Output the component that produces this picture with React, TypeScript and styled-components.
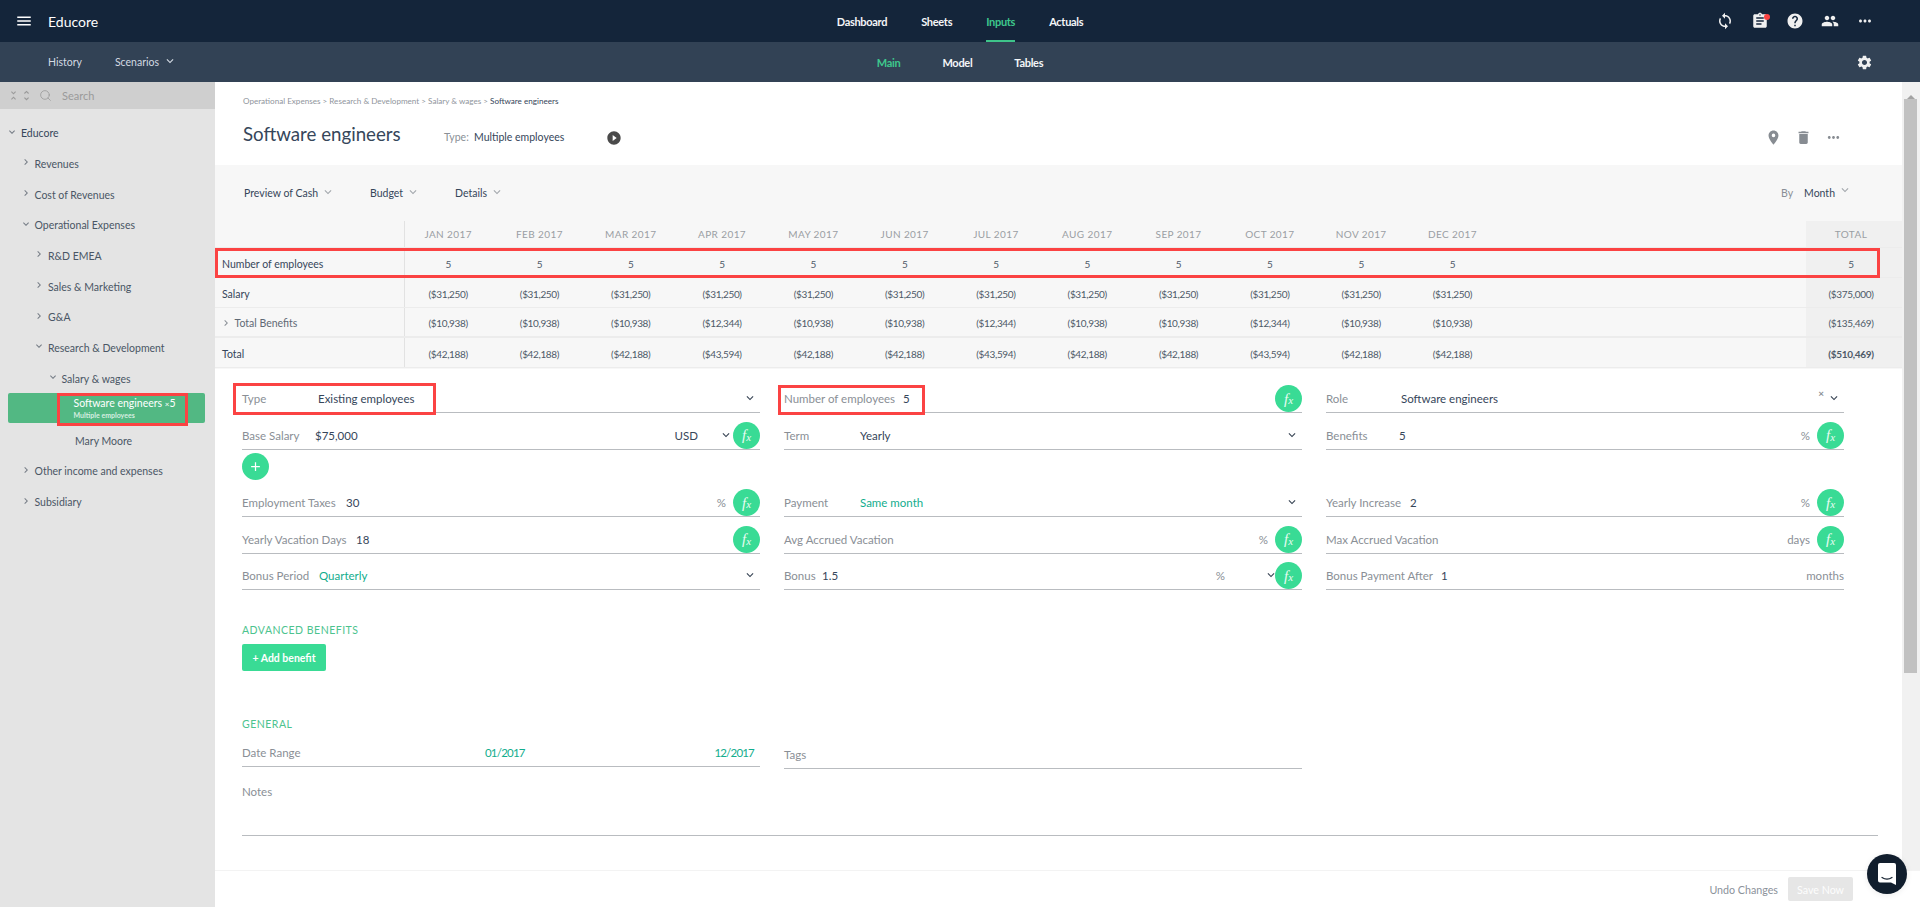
import React from 'react';
import styled, { createGlobalStyle } from 'styled-components';
import {
  MdMenu,
  MdSync,
  MdAssignment,
  MdHelp,
  MdPeople,
  MdMoreHoriz,
  MdSettings,
  MdPlace,
  MdDelete,
  MdPlayCircleFilled,
  MdKeyboardArrowDown,
  MdKeyboardArrowRight,
  MdUnfoldLess,
  MdUnfoldMore,
  MdAdd,
} from 'react-icons/md';
import { Search } from 'lucide-react';

const FONT = `Lato, 'Open Sans', sans-serif`;
const RED = '#fb4343';

const GlobalStyle = createGlobalStyle`
  html, body {
    margin: 0;
    padding: 0;
    height: 100%;
    overflow: hidden;
    background: #fff;
    font-family: ${FONT};
    color: #36465a;
  }
  #root { height: 100%; }
  * { box-sizing: border-box; }
`;

const Page = styled.div`
  position: relative;
  display: flex;
  flex-direction: column;
  height: 907px;
  overflow: hidden;
`;

/* Top bars */
const TopBar = styled.header`
  display: grid;
  grid-template-columns: 1fr auto 1fr;
  height: 42px;
  background: #14253a;
  color: #fff;
`;

const SubBar = styled.div`
  display: grid;
  grid-template-columns: 1fr auto 1fr;
  align-items: center;
  height: 40px;
  background: #324255;
  color: #eef1f4;
`;

const Brand = styled.div`
  display: flex;
  align-items: center;
  padding-left: 15px;
  font-size: 14px;
  svg {
    font-size: 18px;
    margin-right: 15px;
  }
`;

const TopNav = styled.nav`
  display: flex;
  gap: 34px;
`;

const TopLink = styled.a<{ $active?: boolean }>`
  display: flex;
  align-items: center;
  height: 42px;
  font-size: 11px;
  font-weight: 700;
  letter-spacing: -0.3px;
  padding-top: 3px;
  color: ${(p) => (p.$active ? '#3ec88d' : '#f4f6f8')};
  border-bottom: 2px solid ${(p) => (p.$active ? '#3ec48a' : 'transparent')};
`;

const TopActions = styled.div`
  display: flex;
  justify-content: flex-end;
  align-items: center;
  padding-right: 38px;
`;

const TopAction = styled.span`
  position: relative;
  display: flex;
  align-items: center;
  justify-content: center;
  width: 34.8px;
  font-size: 18px;
  color: #f0f0f0;
`;

const NoticeDot = styled.i`
  position: absolute;
  top: 2px;
  right: 8px;
  width: 6px;
  height: 6px;
  border-radius: 50%;
  background: #fb4343;
`;

const SubLeft = styled.div`
  display: flex;
  align-items: center;
  padding-left: 48px;
  gap: 33px;
  font-size: 10.5px;
  color: #d3dae2;
`;

const SubLeftItem = styled.span`
  display: flex;
  align-items: center;
  gap: 4px;
  svg {
    font-size: 14px;
    margin-top: -2px;
  }
`;

const SubNav = styled.nav`
  display: flex;
  gap: 42px;
`;

const SubLink = styled.a<{ $active?: boolean }>`
  font-size: 11px;
  font-weight: 700;
  letter-spacing: -0.3px;
  color: ${(p) => (p.$active ? '#3ec88d' : '#f4f6f8')};
`;

const SubRight = styled.div`
  display: flex;
  justify-content: flex-end;
  padding-right: 47px;
  font-size: 17px;
  color: #f0f0f0;
`;

/* Body */
const Body = styled.div`
  display: flex;
  flex: 1;
  min-height: 0;
`;

const Sidebar = styled.aside`
  width: 215px;
  flex: none;
  background: #e4e4e4;
`;

const SideSearch = styled.div`
  display: flex;
  align-items: center;
  height: 27px;
  padding-left: 7px;
  background: #cfcfcf;
  color: #9a9a9a;
  font-size: 11px;
  svg.fold {
    font-size: 13px;
  }
`;

const SearchGlass = styled.span`
  display: flex;
  margin: 0 10px 0 6px;
`;

const Tree = styled.ul`
  list-style: none;
  margin: 0;
  padding: 9px 0 0;
`;

const TreeRow = styled.li<{ $depth: number }>`
  display: flex;
  align-items: center;
  height: 30.67px;
  padding-left: ${(p) => 6 + p.$depth * 13.5}px;
  font-size: 10.5px;
  color: ${(p) => (p.$depth === 0 ? '#36465a' : '#4a5665')};
`;

const TreeCaret = styled.span`
  display: flex;
  width: 15px;
  font-size: 12px;
  margin-top: -3px;
  color: #767d86;
`;

const SelectedWrap = styled.li`
  position: relative;
  height: 30px;
  margin: -1px 10px 2.5px 8px;
  padding: 3px 0 0 65.5px;
  background: #52b883;
  border-radius: 2px;
  color: #fff;
  font-size: 10.5px;
  line-height: 14px;
  small {
    font-size: 8px;
  }
`;

const SelectedSub = styled.div`
  font-size: 7px;
  font-weight: 700;
  line-height: 8px;
  color: #d5eee0;
`;

const RedBox = styled.span<{ $left: number; $top: number; $w: number; $h: number }>`
  position: absolute;
  left: ${(p) => p.$left}px;
  top: ${(p) => p.$top}px;
  width: ${(p) => p.$w}px;
  height: ${(p) => p.$h}px;
  border: 3px solid ${RED};
  pointer-events: none;
`;

const Main = styled.main`
  flex: 1;
  display: flex;
  flex-direction: column;
  min-width: 0;
`;

const MainScroll = styled.div`
  display: flex;
  height: 788px;
`;

const Content = styled.div`
  flex: 1;
  min-width: 0;
`;

const Track = styled.div`
  display: flex;
  flex-direction: column;
  width: 18px;
  flex: none;
  background: #f1f1f1;
`;

const TrackArrow = styled.div`
  display: flex;
  justify-content: center;
  padding-top: 7px;
  height: 17px;
  &::before {
    content: '';
    border-left: 4px solid transparent;
    border-right: 4px solid transparent;
    border-bottom: 4px solid #a3a3a3;
  }
`;

const TrackThumb = styled.div`
  width: 13px;
  height: 574px;
  margin-left: 2px;
  background: #c1c1c1;
`;

/* Record header */
const RecordHead = styled.section`
  height: 83px;
  padding: 13px 54px 0 28px;
`;

const Breadcrumb = styled.div`
  font-size: 8.1px;
  line-height: 12px;
  color: #8f959c;
  b {
    font-weight: 400;
    color: #36465a;
  }
`;

const TitleRow = styled.div`
  display: flex;
  align-items: center;
  margin-top: 14px;
`;

const Title = styled.h1`
  width: 201px;
  margin: 0;
  font-size: 18.7px;
  font-weight: 400;
  line-height: 26px;
  color: #36465a;
`;

const TypeLabel = styled.span`
  width: 30px;
  font-size: 10.5px;
  color: #8a8f96;
  margin-top: 6px;
`;

const TypeValue = styled.span`
  width: 132px;
  font-size: 10.5px;
  margin-top: 6px;
`;

const PlayIcon = styled.span`
  display: flex;
  font-size: 16px;
  margin-top: 7px;
  color: #4a4a4a;
`;

const RecordActions = styled.div`
  display: flex;
  margin-left: auto;
  margin-top: 6px;
  color: #878c92;
`;

const RecordAction = styled.span`
  display: flex;
  justify-content: center;
  width: 30px;
  font-size: 17px;
`;

/* Table area */
const Sheet = styled.section`
  height: 204px;
  background: #f7f7f7;
`;

const FilterRow = styled.div`
  display: flex;
  align-items: center;
  height: 56px;
  padding: 0 50px 0 29px;
  font-size: 10.5px;
`;

const Filter = styled.span`
  display: flex;
  align-items: center;
  gap: 3px;
  margin-right: 35px;
  svg {
    font-size: 14px;
    color: #a4a9ae;
    margin-top: -2px;
  }
`;

const GroupBy = styled(Filter)`
  margin: 0 0 0 auto;
  gap: 0;
  em {
    font-style: normal;
    color: #8a8f96;
    margin-right: 11px;
  }
  svg {
    margin: -6px 0 0 3px;
  }
`;

const TableRow = styled.div<{ $head?: boolean; $thick?: boolean }>`
  position: relative;
  display: grid;
  grid-template-columns: 190px repeat(12, 91.3px) 1fr 96px;
  height: ${(p) => (p.$head ? 27 : 30)}px;
  border-bottom: ${(p) => (p.$thick ? 2 : 1)}px solid #ececec;
  font-size: 10px;
  color: #4e5a68;
`;

const LabelCell = styled.div`
  display: flex;
  align-items: center;
  padding: 2px 0 0 7px;
  border-right: 1px solid #e2e2e2;
  font-size: 10.5px;
  color: #36465a;
  svg {
    font-size: 12px;
    margin: 0 2.5px 0 -2px;
    color: #8a8f96;
  }
`;

const MutedLabel = styled.span`
  color: #5f6975;
`;

const ValueCell = styled.div`
  display: flex;
  align-items: center;
  justify-content: center;
  padding: 2px 5px 0 0;
  letter-spacing: -0.35px;
`;

const HeadCell = styled(ValueCell)`
  padding-top: 0;
  color: #9a9ea3;
  letter-spacing: 0.4px;
`;

const Spacer = styled.div``;

const TotalCell = styled.div<{ $bold?: boolean; $head?: boolean }>`
  display: flex;
  align-items: center;
  justify-content: center;
  padding: ${(p) => (p.$head ? 0 : 2)}px 6px 0 0;
  background: #f0f0f0;
  font-weight: ${(p) => (p.$bold ? 700 : 400)};
  color: ${(p) => (p.$head ? '#9a9ea3' : '#4e5a68')};
  letter-spacing: ${(p) => (p.$head ? 0.4 : -0.3)}px;
`;

/* Form */
const FormGrid = styled.section`
  position: relative;
  display: grid;
  grid-template-columns: repeat(3, 518px);
  grid-template-rows: 36.5px 36.5px 31px 36.5px 36.5px 36.5px;
  column-gap: 24px;
  padding: 7.5px 0 0 27px;
`;

const Field = styled.div`
  position: relative;
  display: flex;
  align-items: flex-end;
  padding-bottom: 5px;
  border-bottom: 1px solid #b9bcc0;
  font-size: 11.5px;
  line-height: 16px;
`;

const FieldLabel = styled.span<{ $w: number }>`
  flex: none;
  width: ${(p) => p.$w}px;
  color: #8a8f96;
  white-space: nowrap;
`;

const FieldValue = styled.span<{ $accent?: boolean }>`
  color: ${(p) => (p.$accent ? '#12ad8d' : '#36465a')};
`;

const FieldEnd = styled.div`
  display: flex;
  align-items: flex-end;
  margin-left: auto;
`;

const Unit = styled.span<{ $gap: number; $dark?: boolean }>`
  margin-right: ${(p) => p.$gap}px;
  color: ${(p) => (p.$dark ? '#36465a' : '#8a8f96')};
`;

const Chevron = styled.span<{ $gap?: number }>`
  display: flex;
  height: 16px;
  align-items: center;
  margin-right: ${(p) => p.$gap ?? 0}px;
  margin-bottom: 1px;
  font-size: 14px;
  color: #3a4656;
`;

const Clear = styled.span`
  margin-right: 3px;
  margin-bottom: 9px;
  font-size: 10px;
  font-weight: 700;
  line-height: 10px;
  color: #8a8f96;
`;

const Fx = styled.span`
  display: flex;
  align-items: center;
  justify-content: center;
  flex: none;
  width: 27px;
  height: 27px;
  margin-bottom: -5px;
  border-radius: 50%;
  background: #39db95;
  color: #e9fbf3;
  font-family: 'Liberation Serif', serif;
  font-style: italic;
  font-size: 15px;
  small {
    font-size: 11px;
    margin-top: 3px;
  }
`;

const AddRow = styled.div`
  grid-column: 1 / -1;
  padding-top: 3.5px;
`;

const RoundAdd = styled.span`
  display: flex;
  align-items: center;
  justify-content: center;
  width: 27px;
  height: 27px;
  border-radius: 50%;
  background: #39db95;
  color: #fff;
  font-size: 15px;
`;

const Extras = styled.section`
  padding: 0 24px 0 27px;
`;

const SectionTitle = styled.h2<{ $top: number }>`
  margin: ${(p) => p.$top}px 0 0;
  font-size: 10.5px;
  font-weight: 400;
  line-height: 14px;
  letter-spacing: 0.5px;
  color: #4cc38e;
`;

const AddBenefit = styled.button`
  display: block;
  width: 84px;
  height: 27px;
  margin-top: 7px;
  padding: 0;
  border: 0;
  border-radius: 2px;
  background: #39db95;
  color: #fff;
  font-family: ${FONT};
  font-size: 10.5px;
  font-weight: 700;
`;

const GeneralRow = styled.div`
  display: grid;
  grid-template-columns: 518px 518px;
  column-gap: 24px;
  height: 36px;
`;

const TagsField = styled(Field)`
  margin-bottom: -2px;
`;

const RangeStart = styled(FieldValue)`
  letter-spacing: -0.8px;
`;

const RangeEnd = styled(RangeStart)`
  margin-right: 6px;
`;

const NotesField = styled(Field)`
  align-items: flex-start;
  height: 69px;
  padding-top: 17px;
`;

/* Footer + chat */
const SaveBar = styled.footer`
  display: flex;
  align-items: center;
  justify-content: flex-end;
  flex: 1;
  padding-right: 67px;
  border-top: 1px solid #f3f3f3;
  font-size: 10.7px;
`;

const Undo = styled.span`
  margin-right: 10px;
  color: #8b929b;
`;

const SaveNow = styled.span`
  display: flex;
  align-items: center;
  justify-content: center;
  width: 65px;
  height: 24px;
  border-radius: 2px;
  background: #e6e6e6;
  color: #fdfdfd;
`;

const ChatBubble = styled.div`
  position: absolute;
  right: 13px;
  bottom: 13px;
  display: flex;
  align-items: center;
  justify-content: center;
  width: 40px;
  height: 40px;
  border-radius: 50%;
  background: #111e2d;
  box-shadow: 0 1px 6px rgba(0, 0, 0, 0.08);
`;

const MONTHS = ['JAN', 'FEB', 'MAR', 'APR', 'MAY', 'JUN', 'JUL', 'AUG', 'SEP', 'OCT', 'NOV', 'DEC'];

const b1 = '($10,938)';
const b2 = '($12,344)';
const t1 = '($42,188)';
const t2 = '($43,594)';

const Caret = ({ open }: { open?: boolean }) => (
  <TreeCaret>{open ? <MdKeyboardArrowDown /> : <MdKeyboardArrowRight />}</TreeCaret>
);

const FxButton = () => (
  <Fx>
    f<small>x</small>
  </Fx>
);

const ValueRow = ({ values }: { values: string[] }) => (
  <>
    {values.map((v, i) => (
      <ValueCell key={i}>{v}</ValueCell>
    ))}
    <Spacer />
  </>
);

const Down = ({ gap }: { gap?: number }) => (
  <Chevron $gap={gap}>
    <MdKeyboardArrowDown />
  </Chevron>
);

export default function App() {
  return (
    <Page>
      <GlobalStyle />
      <TopBar>
        <Brand>
          <MdMenu />
          Educore
        </Brand>
        <TopNav>
          <TopLink>Dashboard</TopLink>
          <TopLink>Sheets</TopLink>
          <TopLink $active>Inputs</TopLink>
          <TopLink>Actuals</TopLink>
        </TopNav>
        <TopActions>
          <TopAction>
            <MdSync />
          </TopAction>
          <TopAction>
            <MdAssignment />
            <NoticeDot />
          </TopAction>
          <TopAction>
            <MdHelp />
          </TopAction>
          <TopAction>
            <MdPeople />
          </TopAction>
          <TopAction>
            <MdMoreHoriz />
          </TopAction>
        </TopActions>
      </TopBar>
      <SubBar>
        <SubLeft>
          <SubLeftItem>History</SubLeftItem>
          <SubLeftItem>
            Scenarios <MdKeyboardArrowDown />
          </SubLeftItem>
        </SubLeft>
        <SubNav>
          <SubLink $active>Main</SubLink>
          <SubLink>Model</SubLink>
          <SubLink>Tables</SubLink>
        </SubNav>
        <SubRight>
          <MdSettings />
        </SubRight>
      </SubBar>

      <Body>
        <Sidebar>
          <SideSearch>
            <MdUnfoldLess className="fold" />
            <MdUnfoldMore className="fold" />
            <SearchGlass>
              <Search size={13} strokeWidth={1.5} />
            </SearchGlass>
            Search
          </SideSearch>
          <Tree>
            <TreeRow $depth={0}>
              <Caret open />
              Educore
            </TreeRow>
            <TreeRow $depth={1}>
              <Caret />
              Revenues
            </TreeRow>
            <TreeRow $depth={1}>
              <Caret />
              Cost of Revenues
            </TreeRow>
            <TreeRow $depth={1}>
              <Caret open />
              Operational Expenses
            </TreeRow>
            <TreeRow $depth={2}>
              <Caret />
              R&amp;D EMEA
            </TreeRow>
            <TreeRow $depth={2}>
              <Caret />
              Sales &amp; Marketing
            </TreeRow>
            <TreeRow $depth={2}>
              <Caret />
              G&amp;A
            </TreeRow>
            <TreeRow $depth={2}>
              <Caret open />
              Research &amp; Development
            </TreeRow>
            <TreeRow $depth={3}>
              <Caret open />
              Salary &amp; wages
            </TreeRow>
            <SelectedWrap>
              Software engineers <small>×</small>5
              <SelectedSub>Multiple employees</SelectedSub>
              <RedBox $left={49} $top={0} $w={131} $h={33} />
            </SelectedWrap>
            <TreeRow $depth={4}>
              <TreeCaret />
              Mary Moore
            </TreeRow>
            <TreeRow $depth={1}>
              <Caret />
              Other income and expenses
            </TreeRow>
            <TreeRow $depth={1}>
              <Caret />
              Subsidiary
            </TreeRow>
          </Tree>
        </Sidebar>

        <Main>
          <MainScroll>
            <Content>
              <RecordHead>
                <Breadcrumb>
                  Operational Expenses &gt; Research &amp; Development &gt; Salary &amp; wages &gt;{' '}
                  <b>Software engineers</b>
                </Breadcrumb>
                <TitleRow>
                  <Title>Software engineers</Title>
                  <TypeLabel>Type:</TypeLabel>
                  <TypeValue>Multiple employees</TypeValue>
                  <PlayIcon>
                    <MdPlayCircleFilled />
                  </PlayIcon>
                  <RecordActions>
                    <RecordAction>
                      <MdPlace />
                    </RecordAction>
                    <RecordAction>
                      <MdDelete />
                    </RecordAction>
                    <RecordAction>
                      <MdMoreHoriz />
                    </RecordAction>
                  </RecordActions>
                </TitleRow>
              </RecordHead>

              <Sheet>
                <FilterRow>
                  <Filter>
                    Preview of Cash <MdKeyboardArrowDown />
                  </Filter>
                  <Filter>
                    Budget <MdKeyboardArrowDown />
                  </Filter>
                  <Filter>
                    Details <MdKeyboardArrowDown />
                  </Filter>
                  <GroupBy>
                    <em>By</em> Month <MdKeyboardArrowDown />
                  </GroupBy>
                </FilterRow>
                <TableRow $head>
                  <LabelCell />
                  {MONTHS.map((m) => (
                    <HeadCell key={m}>{m} 2017</HeadCell>
                  ))}
                  <Spacer />
                  <TotalCell $head>TOTAL</TotalCell>
                </TableRow>
                <TableRow>
                  <LabelCell>Number of employees</LabelCell>
                  <ValueRow values={MONTHS.map(() => '5')} />
                  <TotalCell>5</TotalCell>
                  <RedBox $left={0} $top={0} $w={1665} $h={30} />
                </TableRow>
                <TableRow>
                  <LabelCell>Salary</LabelCell>
                  <ValueRow values={MONTHS.map(() => '($31,250)')} />
                  <TotalCell>($375,000)</TotalCell>
                </TableRow>
                <TableRow $thick>
                  <LabelCell>
                    <MdKeyboardArrowRight />
                    <MutedLabel>Total Benefits</MutedLabel>
                  </LabelCell>
                  <ValueRow values={[b1, b1, b1, b2, b1, b1, b2, b1, b1, b2, b1, b1]} />
                  <TotalCell>($135,469)</TotalCell>
                </TableRow>
                <TableRow>
                  <LabelCell>Total</LabelCell>
                  <ValueRow values={[t1, t1, t1, t2, t1, t1, t2, t1, t1, t2, t1, t1]} />
                  <TotalCell $bold>($510,469)</TotalCell>
                </TableRow>
              </Sheet>

              <FormGrid>
                <Field>
                  <FieldLabel $w={76}>Type</FieldLabel>
                  <FieldValue>Existing employees</FieldValue>
                  <FieldEnd>
                    <Down gap={3} />
                  </FieldEnd>
                  <RedBox $left={-9} $top={6.5} $w={203} $h={32} />
                </Field>
                <Field>
                  <FieldLabel $w={119}>Number of employees</FieldLabel>
                  <FieldValue>5</FieldValue>
                  <FieldEnd>
                    <FxButton />
                  </FieldEnd>
                  <RedBox $left={-6} $top={8.5} $w={147} $h={30} />
                </Field>
                <Field>
                  <FieldLabel $w={75}>Role</FieldLabel>
                  <FieldValue>Software engineers</FieldValue>
                  <FieldEnd>
                    <Clear>×</Clear>
                    <Down gap={3} />
                  </FieldEnd>
                </Field>

                <Field>
                  <FieldLabel $w={73}>Base Salary</FieldLabel>
                  <FieldValue>$75,000</FieldValue>
                  <FieldEnd>
                    <Unit $gap={21} $dark>
                      USD
                    </Unit>
                    <Down />
                    <FxButton />
                  </FieldEnd>
                </Field>
                <Field>
                  <FieldLabel $w={76}>Term</FieldLabel>
                  <FieldValue>Yearly</FieldValue>
                  <FieldEnd>
                    <Down gap={3} />
                  </FieldEnd>
                </Field>
                <Field>
                  <FieldLabel $w={73}>Benefits</FieldLabel>
                  <FieldValue>5</FieldValue>
                  <FieldEnd>
                    <Unit $gap={7}>%</Unit>
                    <FxButton />
                  </FieldEnd>
                </Field>

                <AddRow>
                  <RoundAdd>
                    <MdAdd />
                  </RoundAdd>
                </AddRow>

                <Field>
                  <FieldLabel $w={104}>Employment Taxes</FieldLabel>
                  <FieldValue>30</FieldValue>
                  <FieldEnd>
                    <Unit $gap={7}>%</Unit>
                    <FxButton />
                  </FieldEnd>
                </Field>
                <Field>
                  <FieldLabel $w={76}>Payment</FieldLabel>
                  <FieldValue $accent>Same month</FieldValue>
                  <FieldEnd>
                    <Down gap={3} />
                  </FieldEnd>
                </Field>
                <Field>
                  <FieldLabel $w={84}>Yearly Increase</FieldLabel>
                  <FieldValue>2</FieldValue>
                  <FieldEnd>
                    <Unit $gap={7}>%</Unit>
                    <FxButton />
                  </FieldEnd>
                </Field>

                <Field>
                  <FieldLabel $w={114}>Yearly Vacation Days</FieldLabel>
                  <FieldValue>18</FieldValue>
                  <FieldEnd>
                    <FxButton />
                  </FieldEnd>
                </Field>
                <Field>
                  <FieldLabel $w={120}>Avg Accrued Vacation</FieldLabel>
                  <FieldEnd>
                    <Unit $gap={7}>%</Unit>
                    <FxButton />
                  </FieldEnd>
                </Field>
                <Field>
                  <FieldLabel $w={120}>Max Accrued Vacation</FieldLabel>
                  <FieldEnd>
                    <Unit $gap={7}>days</Unit>
                    <FxButton />
                  </FieldEnd>
                </Field>

                <Field>
                  <FieldLabel $w={77}>Bonus Period</FieldLabel>
                  <FieldValue $accent>Quarterly</FieldValue>
                  <FieldEnd>
                    <Down gap={3} />
                  </FieldEnd>
                </Field>
                <Field>
                  <FieldLabel $w={38}>Bonus</FieldLabel>
                  <FieldValue>1.5</FieldValue>
                  <FieldEnd>
                    <Unit $gap={39}>%</Unit>
                    <Down gap={-3} />
                    <FxButton />
                  </FieldEnd>
                </Field>
                <Field>
                  <FieldLabel $w={115}>Bonus Payment After</FieldLabel>
                  <FieldValue>1</FieldValue>
                  <FieldEnd>
                    <Unit $gap={0}>months</Unit>
                  </FieldEnd>
                </Field>
              </FormGrid>

              <Extras>
                <SectionTitle $top={33}>ADVANCED BENEFITS</SectionTitle>
                <AddBenefit>+ Add benefit</AddBenefit>
                <SectionTitle $top={46}>GENERAL</SectionTitle>
                <GeneralRow>
                  <Field>
                    <FieldLabel $w={243}>Date Range</FieldLabel>
                    <RangeStart $accent>01/2017</RangeStart>
                    <FieldEnd>
                      <RangeEnd $accent>12/2017</RangeEnd>
                    </FieldEnd>
                  </Field>
                  <TagsField>
                    <FieldLabel $w={60}>Tags</FieldLabel>
                  </TagsField>
                </GeneralRow>
                <NotesField>
                  <FieldLabel $w={60}>Notes</FieldLabel>
                </NotesField>
              </Extras>
            </Content>
            <Track>
              <TrackArrow />
              <TrackThumb />
            </Track>
          </MainScroll>
          <SaveBar>
            <Undo>Undo Changes</Undo>
            <SaveNow>Save Now</SaveNow>
          </SaveBar>
        </Main>
      </Body>

      <ChatBubble>
        <svg width="18" height="22" viewBox="0 0 18 22">
          <path d="M2 0h14a2 2 0 0 1 2 2v20l-5-2.5H2a2 2 0 0 1-2-2V2a2 2 0 0 1 2-2z" fill="#fff" />
          <path d="M4 14.5c3 2 7 2 10 0" fill="none" stroke="#111e2d" strokeWidth="1.2" strokeLinecap="round" />
        </svg>
      </ChatBubble>
    </Page>
  );
}
